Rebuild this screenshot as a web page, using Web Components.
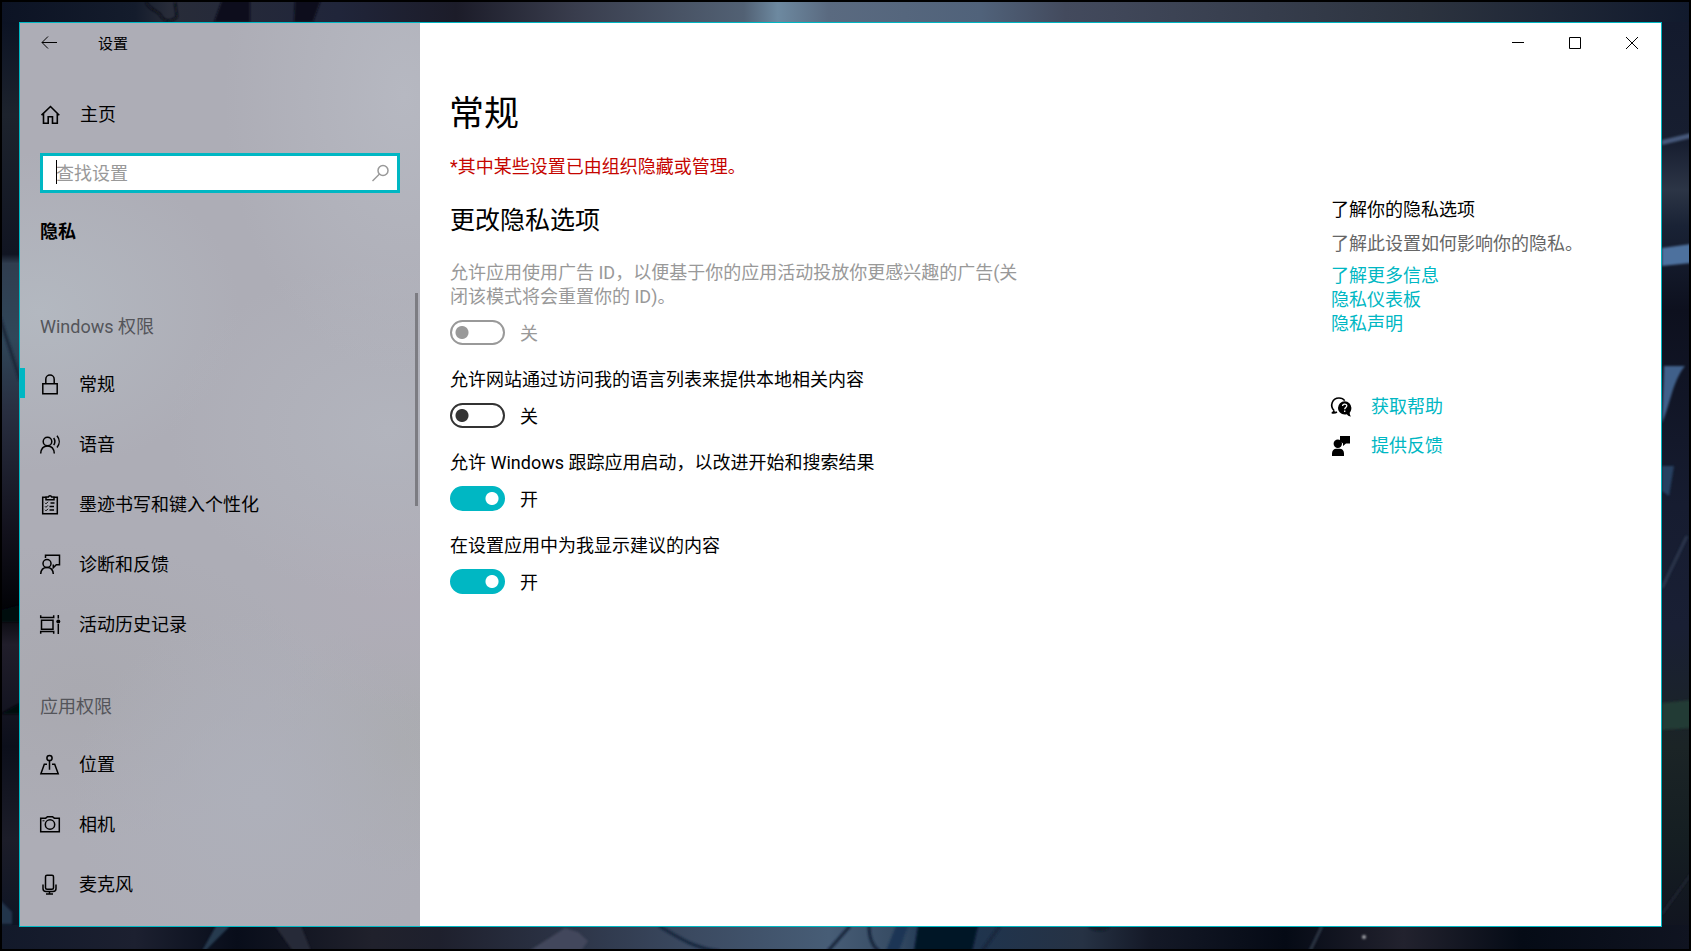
<!DOCTYPE html>
<html lang="zh-CN">
<head>
<meta charset="utf-8">
<title>设置</title>
<style>
  html { background: #000; }
  body {
    margin: 0;
    font: 18px/24px Roboto, "Noto Sans CJK SC", sans-serif;
    color: #000;
    --accent: #00b7c3;
  }
</style>
</head>
<body>
<desktop-wallpaper>
  <settings-window>
    <settings-sidebar slot="sidebar">
      <nav-group heading="Windows 权限">
        <nav-item icon="lock" current>常规</nav-item>
        <nav-item icon="speech">语音</nav-item>
        <nav-item icon="clipboard">墨迹书写和键入个性化</nav-item>
        <nav-item icon="feedback">诊断和反馈</nav-item>
        <nav-item icon="history">活动历史记录</nav-item>
      </nav-group>
      <nav-group heading="应用权限">
        <nav-item icon="location">位置</nav-item>
        <nav-item icon="camera">相机</nav-item>
        <nav-item icon="mic">麦克风</nav-item>
      </nav-group>
    </settings-sidebar>
    <settings-page heading="常规">
      <span slot="notice">*其中某些设置已由组织隐藏或管理。</span>
      <span slot="section">更改隐私选项</span>
      <toggle-setting disabled>允许应用使用广告 ID，以便基于你的应用活动投放你更感兴趣的广告(关闭该模式将会重置你的 ID)。</toggle-setting>
      <toggle-setting>允许网站通过访问我的语言列表来提供本地相关内容</toggle-setting>
      <toggle-setting checked>允许 Windows 跟踪应用启动，以改进开始和搜索结果</toggle-setting>
      <toggle-setting checked>在设置应用中为我显示建议的内容</toggle-setting>
    </settings-page>
    <related-info slot="related"></related-info>
  </settings-window>
</desktop-wallpaper>

<script>
const ICONS = {
  back: '<path d="M17 9.500H2M8 3.500 2 9.500l6 6" stroke-width="1"/>',
  home: '<path d="M1.500 10.200 10.500 1.500l8.800 8.700M3.500 8.700v9.600h4.700v-6.500h4.300v6.500h4.800V8.700" stroke-width="1.600"/>',
  search: '<circle cx="13" cy="7.500" r="5"/><path d="m9.500 11-7 7"/>',
  lock: '<path d="M2.800 8.700h14.400v10H2.800zM5.800 8.700V4.200a4.200 4.200 0 0 1 8.400 0v4.500"/>',
  speech: '<circle cx="7.500" cy="6.500" r="4.300"/><path d="M.7 18.500c.3-4.600 3-7.500 6.800-7.500s6.500 2.900 6.800 7.500M13.700 3c1.400 2.200 1.400 5 0 7.200M17 .7c2.900 3.500 2.900 8.300 0 11.800"/>',
  clipboard: '<path d="M5.500 2.300H2.700v16.500h14.600V2.300h-2.800M6 4.700V2h2.300a1.800 1.800 0 0 1 3.400 0H14v2.700zM10.500 8h4M9.500 11.500h4.500M9.500 15h4.500"/><path d="m5 7.800 1 1 2-2M5 11.300l1 1 2-2M5 14.800l1 1 2-2" stroke-width="1"/>',
  feedback: '<circle cx="7" cy="8.500" r="4"/><path d="M.7 19c.3-4.200 2.700-6.400 6.300-6.400s6 2.200 6.300 6.400M5.500 3V.3h14v9.500h-3.200l-3 3V9.400"/>',
  history: '<path d="M.7.200v2.300h13V.200M1.500 5.200h11.500v9H1.500zM.7 18.800v-2.300h13v2.300M18.300 0v3.500M18.300 9v10"/><circle cx="18.300" cy="6.500" r="2" fill="currentColor" stroke="none"/>',
  location: '<circle cx="9.500" cy="3" r="2.600"/><path d="M9.500 5.500v9.300M7 9.200H4.300L.9 18.800h17.300L14.700 9.200H12"/>',
  camera: '<path d="M.7 3.200h5l1.800-1.500h5l1.800 1.500h5v13.600H.7z"/><circle cx="10" cy="9.500" r="4.700"/><path d="M2.500 5.800h2" stroke-width="1"/>',
  mic: '<rect x="5.500" y=".2" width="8" height="14" rx="1.500"/><path d="M3 9.500v4c0 2 1 3 3 3h7c2 0 3-1 3-3v-4M9.500 16.500V19M6 19h7"/>',
  help: '<path d="M3.200 13.700c-5-5-1.800-12.700 4.800-12.700 3 0 4.700 1.200 5.700 2.600M3.200 13.700c-.3 1.200-1 1.800-2.400 2 1.700.4 3.600.2 5.200-.7" stroke-width="1.600"/><path d="M13.700 4.200a6.700 6.700 0 0 0-6.700 6.600c0 3.800 3 6.700 6.700 6.700 1 0 1.500-.1 2.100-.3 1.200 1.400 2.500 2.200 4.200 2.300-.8-1-1.200-2.100-1.300-3.800 1.100-1.200 1.700-2.900 1.700-4.900a6.700 6.700 0 0 0-6.700-6.600z" fill="currentColor" stroke="none"/><path d="M11.600 9c0-2.600 4.200-2.500 4.200-.3 0 1.700-2.100 1.700-2.100 3.500m0 1.400v1.500" stroke="#fff" stroke-width="1.300"/>',
  person: '<g fill="currentColor" stroke="none"><path d="M9 0h10v7.500h-4L12 10V7.500L9 5z"/><circle cx="6.800" cy="7.800" r="4.200"/><path d="M1 20v-2.500c0-3 2-4.800 4.200-4.800h3.600c2.400 0 4.200 1.800 4.200 4.800V20z"/></g>'
};

function define(name, html, setup) {
  const template = document.createElement('template');
  template.innerHTML = html;
  customElements.define(name, class extends HTMLElement {
    connectedCallback() {
      if (this.shadowRoot) return;
      const root = this.attachShadow({ mode: 'open' });
      root.append(template.content.cloneNode(true));
      if (setup) setup(this, root);
    }
  });
}

define('ui-icon', `
  <style>
    :host { display: block; flex: none; width: 20px; height: 20px; }
    svg { display: block; width: 100%; height: 100%; fill: none; stroke: currentColor; stroke-width: 1.500; overflow: visible; }
  </style>
  <svg viewBox="0 0 20 20" aria-hidden="true"></svg>`,
  (host, root) => { root.querySelector('svg').innerHTML = ICONS[host.getAttribute('name')]; });

define('desktop-wallpaper', `
  <style>
    :host { display: flex; position: relative; box-sizing: border-box; min-height: 100vh; padding: 22px 29px 24px 19px; background: #101525; }
    svg { position: absolute; inset: 0; width: 100%; height: 100%; }
    ::slotted(*) { flex: 1; position: relative; }
  </style>
  <svg viewBox="0 0 1691 951" preserveAspectRatio="none" aria-hidden="true">
    <defs>
      <linearGradient id="top">
        <stop offset="0" stop-color="#0c1324"/><stop offset=".08" stop-color="#141c2c"/>
        <stop offset=".1" stop-color="#282c39"/><stop offset=".2" stop-color="#20253a"/>
        <stop offset=".27" stop-color="#1c1c29"/><stop offset=".34" stop-color="#393d4d"/>
        <stop offset=".44" stop-color="#526174"/><stop offset=".46" stop-color="#6d89a0"/>
        <stop offset=".49" stop-color="#5a6a80"/><stop offset=".58" stop-color="#50627a"/>
        <stop offset=".63" stop-color="#434a5d"/><stop offset=".84" stop-color="#2c333f"/>
        <stop offset="1" stop-color="#111a2d"/>
      </linearGradient>
      <linearGradient id="left" x2="0" y2="1">
        <stop offset="0" stop-color="#0c1324"/><stop offset=".1" stop-color="#1d232d"/>
        <stop offset=".25" stop-color="#111522"/><stop offset=".26" stop-color="#303d4f"/>
        <stop offset=".34" stop-color="#304759"/><stop offset=".42" stop-color="#282e40"/>
        <stop offset=".55" stop-color="#12111c"/><stop offset=".63" stop-color="#020307"/>
        <stop offset=".67" stop-color="#211e2b"/><stop offset=".78" stop-color="#0c0f1b"/>
        <stop offset=".88" stop-color="#1c1d29"/><stop offset="1" stop-color="#0a1222"/>
      </linearGradient>
      <linearGradient id="right" x2="0" y2="1">
        <stop offset="0" stop-color="#131a2d"/><stop offset=".13" stop-color="#171e30"/>
        <stop offset=".18" stop-color="#2c3546"/><stop offset=".22" stop-color="#192235"/>
        <stop offset=".31" stop-color="#0d101e"/><stop offset=".52" stop-color="#161c30"/>
        <stop offset=".65" stop-color="#191f34"/><stop offset=".78" stop-color="#1b2426"/>
        <stop offset=".88" stop-color="#151e22"/><stop offset="1" stop-color="#10121f"/>
      </linearGradient>
      <linearGradient id="bottom">
        <stop offset="0" stop-color="#12192a"/><stop offset=".08" stop-color="#1c2030"/>
        <stop offset=".14" stop-color="#080d1a"/><stop offset=".22" stop-color="#20212c"/>
        <stop offset=".26" stop-color="#1e202d"/><stop offset=".34" stop-color="#2d3548"/>
        <stop offset=".41" stop-color="#3b4a61"/><stop offset=".49" stop-color="#475d76"/>
        <stop offset=".53" stop-color="#364b63"/><stop offset=".55" stop-color="#1c3552"/>
        <stop offset=".64" stop-color="#263244"/><stop offset=".68" stop-color="#141927"/>
        <stop offset=".76" stop-color="#050a15"/><stop offset=".83" stop-color="#22222e"/>
        <stop offset=".9" stop-color="#050b16"/><stop offset="1" stop-color="#101421"/>
      </linearGradient>
      <filter id="soft"><feGaussianBlur stdDeviation="1"/></filter>
    </defs>
    <path d="M0 0h1691v24H0z" fill="url(#top)"/>
    <path d="M0 22h22v929H0z" fill="url(#left)"/>
    <path d="M1655 22h36v929h-36z" fill="url(#right)"/>
    <path d="M0 925h1691v26H0z" fill="url(#bottom)"/>
    <g filter="url(#soft)">
      <path d="M146 2c4 9 12 8 15 14s10 6 16 1l-2-15" fill="none" stroke="#0a0e1a" stroke-width="2"/>
      <path d="M222 0h28v22h-36zM295 0h26l-8 22h-19z" fill="#0b0f1c"/>
      <path d="m0 318 20 62" stroke="#1b2739" stroke-width="3"/>
      <path d="M0 622h22v-18L0 610zM0 714h22v-12z" fill="#05070e"/>
      <path d="m0 900 12 12v12H0z" fill="#20344b"/>
      <path d="M1662 140l29-7v5l-29 7z" fill="#46597a"/>
      <path d="M1662 248l29-4v19l-29 3z" fill="#4e719e"/>
      <path d="M1664 366h21c-13 16-15 40-23 57z" fill="#41608a"/>
      <path d="M1662 466h12l-5 30-7-5z" fill="#263f60"/>
      <path d="M1662 588 1687 536" stroke="#2a364c" stroke-width="3"/>
      <path d="M1662 703l29-3v28l-29 2z" fill="#243b34"/>
      <path d="m1662 914 29-40" stroke="#232735" stroke-width="2"/>
      <path d="m205 951 25-25h-14l-14 25z" fill="#263a50"/>
      <path d="m275 926 18 25h18l-10-25z" fill="#282a37"/>
      <path d="m565 928 13 4 10 9-7 10h-52z" fill="#42475b"/>
      <path d="M659 926c20 12 35 22 60 25M850 926l-22 25M869 926c0 10 3 20 10 25M1000 926l-18 25" fill="none" stroke="#19263c" stroke-width="3"/>
      <path d="M918 926h60l-6 25h-58z" fill="#061227"/>
      <path d="M896 926h12l-9 25h-13z" fill="#1d3654"/>
      <path d="M1088 926h22c-2 7-20 6-22 0z" fill="#121b29"/>
      <path d="m1322 926-12 25" stroke="#2b3443" stroke-width="3"/>
      <circle cx="1364" cy="937" r="2" fill="#a5a7ad"/>
    </g>
    <path d="M0 0h1691v951H0zM2 2v947h1687V2z" fill="#000" fill-rule="evenodd"/>
  </svg>
  <slot></slot>`);

define('settings-window', `
  <style>
    :host { display: flex; border: 1px solid var(--accent); background: #fff; }
    .body { flex: 1; min-width: 0; display: flex; flex-direction: column; }
    .caption { display: flex; justify-content: flex-end; height: 40px; padding-right: 1px; }
    .caption button { width: 57px; padding: 0; border: 0; background: none; color: #000; display: grid; place-items: center; }
    .caption svg { display: block; fill: none; stroke: currentColor; }
    .columns { display: flex; justify-content: space-between; }
  </style>
  <slot name="sidebar"></slot>
  <div class="body">
    <div class="caption">
      <button aria-label="最小化"><svg width="12" height="12"><path d="M0 5.500h12"/></svg></button>
      <button aria-label="最大化"><svg width="12" height="12"><path d="M.5.500h11v11H.500z"/></svg></button>
      <button aria-label="关闭"><svg width="12" height="12"><path d="m0 0 12 12M12 0 0 12"/></svg></button>
    </div>
    <div class="columns"><slot></slot><slot name="related"></slot></div>
  </div>`);

define('settings-sidebar', `
  <style>
    :host {
      display: block; flex: none; width: 400px;
      background:
        radial-gradient(ellipse 180px 280px at 96% 8%, #b6b8c1, transparent),
        radial-gradient(ellipse 200px 160px at 5% 32%, #b3b8c0, transparent),
        radial-gradient(ellipse 220px 170px at 92% 45%, #b2b4bd, transparent),
        radial-gradient(ellipse 150px 130px at 95% 62%, #b0adb7, transparent),
        radial-gradient(ellipse 190px 190px at 60% 86%, #aeb0ba, transparent),
        radial-gradient(ellipse 140px 130px at 95% 80%, #aaabaf, transparent),
        radial-gradient(ellipse 240px 150px at 15% 74%, #a9a9b0, transparent),
        #adadb6;
    }
    .title { display: flex; align-items: center; height: 40px; padding-left: 20px; font-size: 15px; }
    .back { width: 20px; height: 20px; padding: 0; border: 0; background: none; color: #000; }
    .title span { margin-left: 38px; padding-top: 2px; }
    .home { display: flex; align-items: center; gap: 20px; height: 40px; margin-top: 32px; padding-left: 20px; color: inherit; text-decoration: none; }
    .search { position: relative; display: flex; align-items: center; box-sizing: border-box; height: 40px; margin: 18px 20px 0; padding: 0 7px 0 13px; border: 3px solid var(--accent); background: #fff; color: #999; }
    .search input { flex: 1; min-width: 0; padding: 2px 0 0; border: 0; outline: 0; background: none; font: inherit; color: #000; caret-color: transparent; }
    .search input::placeholder { color: #999; opacity: 1; }
    .caret { position: absolute; left: 13px; top: 4px; width: 1px; height: 24px; background: #000; }
    h2 { margin: 25px 20px 0; font-size: 18px; line-height: 28px; font-weight: 700; }
    nav { position: relative; margin-top: 47px; padding-top: 6px; }
    .thumb { position: absolute; top: 0; right: 2px; width: 3px; height: 213px; background: #7c7c82; }
  </style>
  <div class="title"><button class="back" aria-label="返回"><ui-icon name="back"></ui-icon></button><span>设置</span></div>
  <a class="home" href="#home"><ui-icon name="home"></ui-icon><span>主页</span></a>
  <div class="search"><input type="text" placeholder="查找设置" aria-label="查找设置"><i class="caret"></i><ui-icon name="search"></ui-icon></div>
  <h2>隐私</h2>
  <nav><slot></slot><i class="thumb"></i></nav>`);

define('nav-group', `
  <style>
    :host { display: block; }
    :host(:not(:first-child)) { margin-top: 24px; }
    h3 { margin: 0; padding: 0 20px; font-size: 18px; line-height: 56px; font-weight: 400; color: #54555a; }
  </style>
  <h3></h3><slot></slot>`,
  (host, root) => { root.querySelector('h3').textContent = host.getAttribute('heading'); });

define('nav-item', `
  <style>
    :host { display: block; }
    a { position: relative; display: flex; align-items: center; gap: 19px; height: 60px; padding-left: 20px; color: inherit; text-decoration: none; }
    :host([current]) a::before { content: ""; position: absolute; left: 0; top: 13px; width: 5px; height: 30px; background: var(--accent); }
  </style>
  <a href="#page"></a>`,
  (host, root) => {
    const a = root.querySelector('a');
    a.innerHTML = `<ui-icon name="${host.getAttribute('icon')}"></ui-icon><span><slot></slot></span>`;
    if (host.hasAttribute('current')) a.setAttribute('aria-current', 'page');
  });

define('settings-page', `
  <style>
    :host { display: block; box-sizing: border-box; max-width: 620px; padding: 28px 0 40px 29px; }
    h1 { margin: 0; font-size: 35px; line-height: 48px; font-weight: 400; }
    p { margin: 16px 0 0; color: #c50500; }
    h2 { margin: 26px 0 24px; font-size: 25px; line-height: 32px; font-weight: 400; }
    p, h2, ::slotted(toggle-setting) { padding-left: 1px; }
  </style>
  <h1></h1>
  <p><slot name="notice"></slot></p>
  <h2><slot name="section"></slot></h2>
  <slot></slot>`,
  (host, root) => { root.querySelector('h1').textContent = host.getAttribute('heading'); });

define('toggle-setting', `
  <style>
    :host { display: block; margin-bottom: 23px; max-width: 580px; }
    :host([disabled]) { color: #999; }
    label { display: block; }
    .row { display: flex; align-items: center; gap: 15px; height: 25px; margin-top: 11px; }
    .row span { padding-top: 2px; }
    input { appearance: none; box-sizing: border-box; flex: none; width: 55px; height: 25px; margin: 0; border: 2px solid #333; border-radius: 13px; background: radial-gradient(circle at 10px 50%, #333 6px, transparent 7px); }
    input:disabled { border-color: #999; background: radial-gradient(circle at 10px 50%, #999 6px, transparent 7px); }
    input:checked { border-color: var(--accent); background: radial-gradient(circle at 40px 50%, #fff 6px, var(--accent) 7px); }
  </style>
  <label for="switch"><slot></slot></label>
  <div class="row"><input id="switch" type="checkbox" role="switch"><span></span></div>`,
  (host, root) => {
    const input = root.querySelector('input'), state = root.querySelector('span');
    input.checked = host.hasAttribute('checked');
    input.disabled = host.hasAttribute('disabled');
    const update = () => { state.textContent = input.checked ? '开' : '关'; };
    input.addEventListener('change', update);
    update();
  });

define('related-info', `
  <style>
    :host { display: block; flex: none; width: 330px; padding-top: 135px; }
    h2 { margin: 0; font-size: 18px; line-height: 24px; font-weight: 400; }
    p { margin: 10px 0 8px; color: #666; }
    a { color: var(--accent); text-decoration: none; }
    ul { margin: 0; padding: 0; list-style: none; }
    .support { margin-top: 59px; display: grid; gap: 15px; }
    .support li { display: flex; align-items: center; gap: 20px; }
  </style>
  <h2>了解你的隐私选项</h2>
  <p>了解此设置如何影响你的隐私。</p>
  <ul>
    <li><a href="#more">了解更多信息</a></li>
    <li><a href="#dashboard">隐私仪表板</a></li>
    <li><a href="#statement">隐私声明</a></li>
  </ul>
  <ul class="support">
    <li><ui-icon name="help"></ui-icon><a href="#help">获取帮助</a></li>
    <li><ui-icon name="person"></ui-icon><a href="#feedback">提供反馈</a></li>
  </ul>`);
</script>
</body>
</html>
